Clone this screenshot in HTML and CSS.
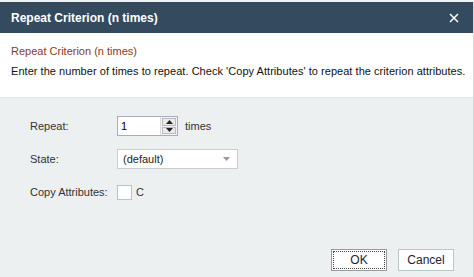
FILE: index.html
```html
<!DOCTYPE html>
<html>
<head>
<meta charset="utf-8">
<link rel="stylesheet" href="styles.css">
</head>
<body>
<div class="dialog">
  <div class="titlebar">
    <span class="title">Repeat Criterion (n times)</span>
    <span class="close"><svg width="10" height="10" viewBox="0 0 10 10"><path d="M1 1 L9 9 M9 1 L1 9" stroke="#fff" stroke-width="1.5"/></svg></span>
  </div>
  <div class="header">
    <div class="heading">Repeat Criterion (n times)</div>
    <div class="desc">Enter the number of times to repeat. Check 'Copy Attributes' to repeat the criterion attributes.</div>
  </div>
  <div class="body">
    <div class="form">
      <div class="row">
        <label class="lbl">Repeat:</label>
        <div class="spin">
          <span class="spin-val">1</span>
          <span class="spin-btns">
            <span class="sb"><svg width="7" height="4" viewBox="0 0 7 4"><path d="M0 4 L3.5 0 L7 4Z" fill="#222"/></svg></span>
            <span class="sb"><svg width="7" height="4" viewBox="0 0 7 4"><path d="M0 0 L3.5 4 L7 0Z" fill="#222"/></svg></span>
          </span>
        </div>
        <span class="unit">times</span>
      </div>
      <div class="row">
        <label class="lbl">State:</label>
        <div class="select">
          <span>(default)</span>
          <svg width="7" height="4" viewBox="0 0 7 4"><path d="M0 0 L3.5 4 L7 0Z" fill="#999"/></svg>
        </div>
      </div>
      <div class="row">
        <label class="lbl">Copy Attributes:</label>
        <span class="check"></span>
        <span class="ctext">C</span>
      </div>
    </div>
    <div class="buttons">
      <button class="btn ok"><span class="focus">OK</span></button>
      <button class="btn">Cancel</button>
    </div>
  </div>
</div>
</body>
</html>
```
FILE: styles.css
```css
html, body {
  margin: 0;
  padding: 0;
  background: #f0f0f0;
}
body {
  font-family: "Liberation Sans", Arial, sans-serif;
  font-size: 11px;
  color: #222;
  width: 474px;
  height: 277px;
  overflow: hidden;
}
.dialog {
  margin-top: 2px;
  height: 275px;
  display: flex;
  flex-direction: column;
  border-right: 1px solid #d8d8d8;
  box-sizing: border-box;
}
.titlebar {
  height: 31px;
  background: #344a5e;
  color: #fff;
  display: flex;
  align-items: center;
  justify-content: space-between;
  padding: 0 14px 0 11px;
  flex: none;
}
.title {
  font-weight: bold;
  font-size: 12px;
}
.close {
  display: flex;
}
.header {
  background: #fff;
  height: 65px;
  padding: 12px 0 0 11px;
  box-sizing: border-box;
  border-bottom: 1px solid #e4e7e8;
  flex: none;
}
.heading {
  color: #8b3a1e;
  margin-bottom: 8px;
}
.desc {
  color: #111;
  white-space: nowrap;
  letter-spacing: 0.04px;
}
.body {
  flex: 1;
  background: #ecf0f1;
  display: flex;
  flex-direction: column;
  justify-content: space-between;
  padding: 18px 19px 6px 30px;
}
.form {
  display: flex;
  flex-direction: column;
  gap: 13px;
}
.row {
  display: flex;
  align-items: center;
  height: 20px;
}
.lbl {
  width: 87px;
  flex: none;
  white-space: nowrap;
  color: #333;
}
.spin {
  width: 61px;
  height: 20px;
  box-sizing: border-box;
  border: 1px solid #aab;
  background: #fff;
  display: flex;
  justify-content: space-between;
}
.spin-val {
  padding-left: 3px;
  line-height: 19px;
  color: #000;
}
.spin-btns {
  display: flex;
  flex-direction: column;
  width: 14px;
  border-left: 1px solid #ddd;
  background: #f4f4f4;
  padding: 1px;
  gap: 1px;
}
.sb {
  flex: 1;
  display: flex;
  align-items: center;
  justify-content: center;
  border: 1px solid #bbb;
  background: #eaeaea;
}
.unit {
  margin-left: 7px;
  color: #333;
}
.select {
  width: 121px;
  height: 20px;
  box-sizing: border-box;
  border: 1px solid #c8cdd0;
  background: #fff;
  display: flex;
  align-items: center;
  justify-content: space-between;
  padding: 0 7px 0 5px;
  color: #222;
}
.check {
  width: 15px;
  height: 15px;
  box-sizing: border-box;
  border: 1px solid #bcc2c5;
  background: #fff;
}
.ctext {
  margin-left: 4px;
  color: #333;
}
.buttons {
  display: flex;
  justify-content: flex-end;
  gap: 11px;
}
.btn {
  width: 56px;
  height: 22px;
  font-family: inherit;
  font-size: 12px;
  background: #fff;
  color: #223;
  border: 1px solid #b8c8c8;
  padding: 0;
}
.btn.ok {
  border: 1px solid #999;
  display: flex;
  align-items: center;
  justify-content: center;
  padding: 1px;
}
.btn.ok .focus {
  flex: 1;
  align-self: stretch;
  display: flex;
  align-items: center;
  justify-content: center;
  border: 1px dotted #444;
}
```
